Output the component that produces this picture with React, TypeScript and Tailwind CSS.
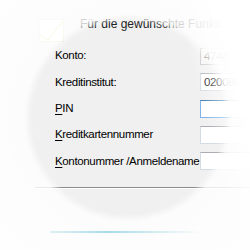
import React from 'react';

const fields = [
  { label: 'Konto:', key: '', value: '4748', state: 'disabled' },
  { label: 'Kreditinstitut:', key: '', value: '0200800', state: 'normal' },
  { label: 'IN', key: 'P', value: '', state: 'focus' },
  { label: 'reditkartennummer', key: 'K', value: '', state: 'normal' },
  { label: 'ontonummer /Anmeldename', key: 'K', value: '', state: 'normal' },
];

const App: React.FC = () => {
  return (
    <div className="relative w-[250px] h-[250px] overflow-hidden bg-[#f0f0f0] font-['Liberation_Sans',sans-serif] text-[11.5px] tracking-[-0.35px] text-black">
      <div className="flex">
        <div className="ml-[16px] mt-[30px] w-px h-[157px] bg-black" />
        <div className="flex-1">
          <div className="flex items-start pt-[15px] pl-[23px] gap-[16px]">
            <svg width="25" height="23" viewBox="0 0 25 23" className="shrink-0 mt-[4px]">
              <rect x="0.5" y="0.5" width="24" height="22" fill="#ffffff" stroke="#e6e2c8" />
              <path d="M1 16 L9 21 L24 2" fill="none" stroke="#f0e8b0" strokeWidth="1.5" />
              <path d="M2 20 L10 12" fill="none" stroke="#f2eed4" />
            </svg>
            <span className="text-[#222] whitespace-nowrap text-[12px] tracking-normal">Für die gewünschte Funktion</span>
          </div>
          <div className="flex flex-col gap-[8.3px] mt-[5px] pl-[39px]">
            {fields.map((f, i) => (
              <div key={i} className="flex items-center h-[18px]">
                <div className="w-[145px] whitespace-nowrap">
                  {f.key && <span className="underline underline-offset-2">{f.key}</span>}
                  {f.label}
                </div>
                <div
                  className={
                    f.state === 'disabled'
                      ? 'w-[80px] h-[17px] border border-[#c8c8c8] bg-[#f4f4f4] text-[#6a6a6a] pl-[3px] leading-[15px]'
                      : f.state === 'focus'
                      ? 'w-[80px] h-[18px] border border-[#7eb4ea] border-t-[#3d7bad] bg-white pl-[3px] leading-[16px]'
                      : 'w-[80px] h-[18px] border border-[#d5dbe3] border-t-[#abadb3] bg-white pl-[3px] leading-[16px]'
                  }
                >
                  {f.value}
                </div>
              </div>
            ))}
          </div>
        </div>
      </div>
      <div className="ml-[35px] h-[1px] bg-[#8a8a8a]" />
      <div className="ml-[35px] h-[1px] bg-white" />
      <div className="absolute inset-0 pointer-events-none bg-[radial-gradient(circle_at_128px_118px,rgba(255,255,255,0)_96px,rgba(255,255,255,0.8)_104px,rgba(255,255,255,0.92)_170px),linear-gradient(75deg,rgba(255,255,255,0)_76%,#fff_90%)]" />
      <div className="relative mt-[42px] ml-[50px] w-[150px] h-[2px] bg-[linear-gradient(to_right,rgba(150,210,228,0.3),#a8dbe8_40%,rgba(168,219,232,0))]" />
    </div>
  );
};

export default App;
